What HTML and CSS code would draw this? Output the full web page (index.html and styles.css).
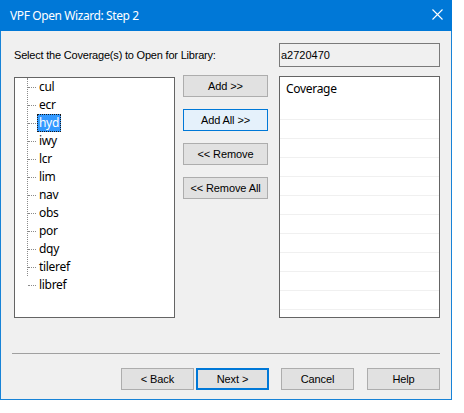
FILE: index.html
```html
<!DOCTYPE html>
<html>
<head>
<meta charset="utf-8">
<link rel="stylesheet" href="styles.css">
</head>
<body>
<div class="window">
  <div class="titlebar">
    <span class="title">VPF Open Wizard: Step 2</span>
    <svg class="close" width="11" height="11" viewBox="0 0 11 11"><path d="M0.5 0.5 L10.5 10.5 M10.5 0.5 L0.5 10.5" stroke="#fff" stroke-width="1.1" fill="none"/></svg>
  </div>
  <div class="content">
    <div class="row-top">
      <span class="label">Select the Coverage(s) to Open for Library:</span>
      <div class="textbox">a2720470</div>
    </div>
    <div class="row-main">
      <div class="tree">
        <ul class="items">
          <li><span class="node">cul</span></li>
          <li><span class="node">ecr</span></li>
          <li><span class="node selected">hyd</span></li>
          <li><span class="node">iwy</span></li>
          <li><span class="node">lcr</span></li>
          <li><span class="node">lim</span></li>
          <li><span class="node">nav</span></li>
          <li><span class="node">obs</span></li>
          <li><span class="node">por</span></li>
          <li><span class="node">dqy</span></li>
          <li><span class="node">tileref</span></li>
          <li><span class="node">libref</span></li>
        </ul>
      </div>
      <div class="mid-buttons">
        <button class="btn">Add &gt;&gt;</button>
        <button class="btn focus">Add All &gt;&gt;</button>
        <button class="btn">&lt;&lt; Remove</button>
        <button class="btn">&lt;&lt; Remove All</button>
      </div>
      <div class="list">
        <div class="list-head">Coverage</div>
        <div class="list-row"></div>
        <div class="list-row"></div>
        <div class="list-row"></div>
        <div class="list-row"></div>
        <div class="list-row"></div>
        <div class="list-row"></div>
        <div class="list-row"></div>
        <div class="list-row"></div>
        <div class="list-row"></div>
        <div class="list-row"></div>
        <div class="list-row"></div>
      </div>
    </div>
    <div class="separator"></div>
    <div class="row-bottom">
      <button class="btn wide">&lt; Back</button>
      <button class="btn wide default">Next &gt;</button>
      <button class="btn wide cancel">Cancel</button>
      <button class="btn wide help">Help</button>
    </div>
  </div>
</div>
</body>
</html>
```
FILE: styles.css
```css
html, body {
  margin: 0;
  padding: 0;
  background: #ffffff;
}

.window {
  box-sizing: border-box;
  width: 452px;
  height: 400px;
  border: 1px solid #1883d7;
  border-top: none;
  background: #f0f0f0;
  display: flex;
  flex-direction: column;
}

.titlebar {
  height: 31px;
  background: #0078d7;
  display: flex;
  align-items: center;
  justify-content: space-between;
  padding: 0 9px 0 10px;
  margin: 0 -1px;
}

.title {
  color: #ffffff;
  font-family: "Segoe UI", "Noto Sans", sans-serif;
  font-size: 12px;
  letter-spacing: -0.4px;
  padding-bottom: 1px;
}

.close {
  display: block;
  margin-bottom: 3px;
}

.content {
  padding: 12px 11px 0 13px;
  font-family: "Liberation Sans", Arial, sans-serif;
  font-size: 11px;
  color: #000;
}

.row-top {
  display: flex;
  align-items: center;
  justify-content: space-between;
  height: 24px;
}

.label {
  padding-bottom: 1px;
  letter-spacing: -0.2px;
}

.textbox {
  box-sizing: border-box;
  width: 161px;
  height: 24px;
  border: 1px solid #7a7a7a;
  background: #f0f0f0;
  display: flex;
  align-items: center;
  padding: 0 0 1px 1px;
}

.row-main {
  display: flex;
  align-items: flex-start;
  margin-top: 8px;
}

.tree {
  box-sizing: border-box;
  width: 161px;
  height: 241px;
  margin-top: 2px;
  border: 1px solid #646464;
  background: #ffffff;
  font-family: "Segoe UI", "Noto Sans", sans-serif;
  font-size: 12px;
  letter-spacing: -0.3px;
}

.items {
  list-style: none;
  margin: 9px 0 0 12px;
  padding: 0;
  height: 198px;
  border-left: 1px dotted #8a8a8a;
}

.items li {
  height: 18px;
  display: flex;
  align-items: center;
}

.items li:first-child {
  margin-top: -9px;
}

.items li::before {
  content: "";
  width: 8px;
  border-top: 1px dotted #8a8a8a;
  margin-right: 1px;
}

.node {
  box-sizing: border-box;
  height: 18px;
  line-height: 17px;
  padding: 0 2px;
  color: #000;
}

.node.selected {
  background: #3399ff;
  color: #fff;
  outline: 1px dotted #1a1a1a;
  outline-offset: -1px;
}

.mid-buttons {
  width: 85px;
  margin-left: 8px;
  display: flex;
  flex-direction: column;
  gap: 12px;
}

.btn {
  box-sizing: border-box;
  height: 22px;
  margin: 0;
  padding: 0 0 1px 0;
  border: 1px solid #adadad;
  background: #e1e1e1;
  font-family: "Liberation Sans", Arial, sans-serif;
  font-size: 11px;
  letter-spacing: -0.1px;
  color: #000;
  width: 85px;
}

.btn.focus {
  border-color: #0078d7;
  background: #e5f1fb;
}

.list {
  box-sizing: border-box;
  width: 161px;
  height: 242px;
  margin-left: 11px;
  margin-top: 1px;
  border: 1px solid #646464;
  background: #ffffff;
  overflow: hidden;
}

.list-head {
  height: 42px;
  box-sizing: border-box;
  padding: 4px 0 0 6px;
  font-family: "Segoe UI", "Noto Sans", sans-serif;
  font-size: 12px;
  letter-spacing: -0.3px;
  line-height: 16px;
}

.list-row {
  box-sizing: border-box;
  height: 19px;
  border-top: 1px solid #f0f0f0;
}

.separator {
  height: 1px;
  background: #a0a0a0;
  margin: 35px 0 0 -2px;
}

.row-bottom {
  display: flex;
  justify-content: flex-end;
  margin-top: 14px;
}

.btn.wide {
  width: 73px;
}

.btn.default {
  border: 2px solid #0078d7;
  margin-left: 2px;
}

.btn.cancel {
  margin-left: 12px;
}

.btn.help {
  margin-left: 13px;
}
```
